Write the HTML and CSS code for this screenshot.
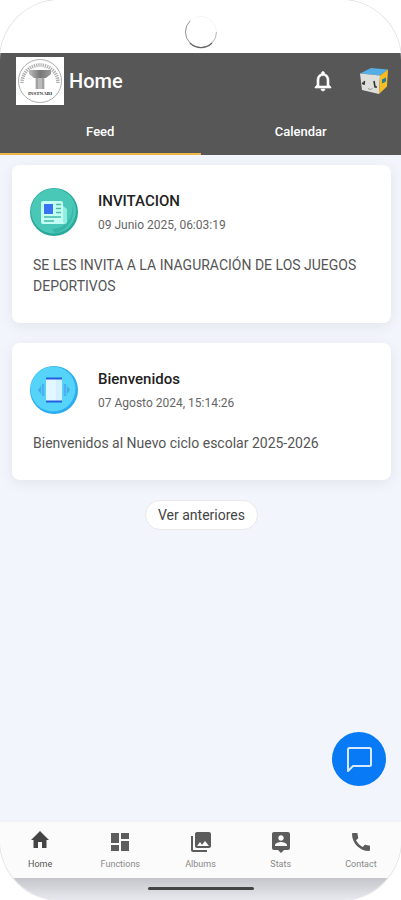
FILE: index.html
```html
<!DOCTYPE html>
<html lang="es">
<head>
  <meta charset="UTF-8">
  <meta name="viewport" content="width=device-width, initial-scale=1">
  <title>Home</title>
  <link rel="stylesheet" href="styles.css">
</head>
<body>
  <div class="phone">
    <!-- Camera -->
    <div class="notch">
      <svg width="34" height="34" viewBox="0 0 34 34" aria-hidden="true">
        <circle cx="17" cy="17" r="15.5" fill="none" stroke="#f4f4f4"/>
        <path d="M6 6A15.5 15.5 0 0 0 6 28" fill="none" stroke="#999"/>
        <path d="M6 28A15.500 15.500 0 0 0 28 28" fill="none" stroke="#666" stroke-width="1.300"/>
        <path d="M28 28A15.500 15.500 0 0 0 32.500 17" fill="none" stroke="#bbb"/>
      </svg>
    </div>

    <!-- Header -->
    <header class="header">
      <div class="appbar">
        <svg class="logo" viewBox="0 0 48 48" role="img" aria-label="Logo">
          <defs>
            <linearGradient id="stone"><stop stop-color="#bbb"/><stop offset=".5" stop-color="#777"/><stop offset="1" stop-color="#999"/></linearGradient>
          </defs>
          <rect width="48" height="48" fill="#fff"/>
          <circle cx="24" cy="24" r="21.5" fill="none" stroke="#999" stroke-width=".8"/>
          <path d="M6 26A18 18 0 1 1 42 26" fill="none" stroke="#b0b0b0" stroke-width="3.600" stroke-dasharray="1.300 .9"/>
          <path d="M13 13h22v4l-5 4H18l-5-4z" fill="url(#stone)"/>
          <path d="M19.500 21h9v11h-9z" fill="#bbb"/>
          <path d="M21 21v11M27 21v11" stroke="#888"/>
          <text x="24" y="38" class="logo-text">INSTNABI</text>
        </svg>
        <h1 class="title">Home</h1>
        <button class="icon-button" aria-label="Notifications">
          <svg width="24" height="24" viewBox="0 0 24 24" fill="#fff" stroke="#fff" stroke-width=".6"><path d="M12 22c1.100 0 2-.9 2-2h-4c0 1.100.9 2 2 2zm6-6v-5c0-3.070-1.630-5.640-4.500-6.320V4c0-.83-.67-1.500-1.500-1.500s-1.500.67-1.500 1.500v.68C7.640 5.360 6 7.920 6 11v5l-2 2v1h16v-1l-2-2zm-2 1H8v-6c0-2.480 1.510-4.500 4-4.500s4 2.020 4 4.500v6z"/></svg>
        </button>
        <button class="icon-button" aria-label="Profile">
          <svg width="30" height="28" viewBox="0 0 30 28">
            <path d="M1 6.500 12 1l17 1.500-8 6z" fill="#55aee5"/>
            <path d="M1 6.500l20 2-1 18.500L3 23z" fill="#dededb"/>
            <path d="M21 8.500l8-6-1 17-8 7.500z" fill="#f7bd25"/>
            <path d="M23 12.500l4-2v4l-4 2z" fill="#277e91"/>
            <path d="M5.500 14l-.5 3-2-1M15 14l1 6h2" fill="none" stroke="#333" stroke-width="1.600"/>
            <path d="M9 21.500q2.500 2 4.500 0" fill="none" stroke="#999"/>
          </svg>
        </button>
      </div>
      <nav class="tabs">
        <button class="tab active">Feed</button>
        <button class="tab">Calendar</button>
      </nav>
    </header>

    <!-- Feed -->
    <main class="feed">
      <article class="card">
        <div class="card-head">
          <svg width="48" height="48" viewBox="0 0 48 48" aria-hidden="true">
            <circle cx="24" cy="24" r="24" fill="#2aa89a"/>
            <circle cx="23.500" cy="23" r="22.500" fill="#49c8b8"/>
            <path d="M42 16q2 14-8 21-6 4-12 4l3 4a22 22 0 0 0 17-29z" fill="#37b7a8"/>
            <path d="M33 18l4 3v12.500a2.500 2.500 0 0 1-2.500 2.500h-2z" fill="#91eee0"/>
            <path d="M13 13h18a2 2 0 0 1 2 2v18q0 2 1 3H13a2 2 0 0 1-2-2V15a2 2 0 0 1 2-2z" fill="#c3fff2"/>
            <rect x="14" y="16" width="9" height="10" fill="#3773f4"/>
            <path d="M26 16.500h5M26 20.500h5M26 24.500h5M14 29h17M14 33h10" stroke="#49b9ad" stroke-width="1.300"/>
          </svg>
          <div class="card-info">
            <h2>INVITACION</h2>
            <time datetime="2025-06-09T06:03:19">09 Junio 2025, 06:03:19</time>
          </div>
        </div>
        <p>SE LES INVITA A LA INAGURACIÓN DE LOS JUEGOS DEPORTIVOS</p>
      </article>

      <article class="card">
        <div class="card-head">
          <svg width="48" height="48" viewBox="0 0 48 48" aria-hidden="true">
            <circle cx="24" cy="24" r="24" fill="#2bacf1"/>
            <circle cx="23" cy="23" r="22.500" fill="#55d3f9"/>
            <path d="M8 24l3-4v8zM40 24l-3-4v8z" fill="#45a9e8"/>
            <path d="M13 18v12M35 18v12" stroke="#4db0ee" stroke-width="2.500"/>
            <path d="M16 13h16v22H16z" fill="#e2f7ff"/>
            <path d="M26 13h6v22h-6z" fill="#d2f0ff"/>
            <path d="M16 12.500h16M16 35.500h16" stroke="#235de0" stroke-width="2"/>
          </svg>
          <div class="card-info">
            <h2>Bienvenidos</h2>
            <time datetime="2024-08-07T15:14:26">07 Agosto 2024, 15:14:26</time>
          </div>
        </div>
        <p>Bienvenidos al Nuevo ciclo escolar 2025-2026</p>
      </article>

      <button class="more">Ver anteriores</button>
    </main>

    <button class="chat" aria-label="Chat">
      <svg width="28" height="28" viewBox="0 0 28 28" fill="none" stroke="#d8eaff" stroke-width="2" stroke-linejoin="round"><path d="M3 26V4.500Q3 3 4.500 3h20Q26 3 26 4.500v15q0 1.500-1.500 1.500H8z"/></svg>
    </button>

    <!-- Bottom navigation -->
    <nav class="bottom-nav">
      <a href="#home" class="current">
        <svg viewBox="0 0 24 24"><path d="M10 18v-6h4v6h4.500v-8H21L12 1 3 10h2.500v8z"/></svg>
        <span>Home</span>
      </a>
      <a href="#functions">
        <svg viewBox="0 0 24 24"><path d="M3 13h8V3H3v10zm0 8h8v-6H3v6zm10 0h8V11h-8v10zm0-18v6h8V3h-8z"/></svg>
        <span>Functions</span>
      </a>
      <a href="#albums">
        <svg viewBox="0 0 24 24"><path d="M22 16V4c0-1.100-.9-2-2-2H8c-1.100 0-2 .9-2 2v12c0 1.100.9 2 2 2h12c1.100 0 2-.9 2-2zm-11-4l2.030 2.710L16 11l4 5H8l3-4zM2 6v14c0 1.100.9 2 2 2h14v-2H4V6H2z"/></svg>
        <span>Albums</span>
      </a>
      <a href="#stats">
        <svg viewBox="0 0 24 24"><path d="M19 2H5c-1.110 0-2 .9-2 2v14c0 1.100.89 2 2 2h4l3 3 3-3h4c1.100 0 2-.9 2-2V4c0-1.100-.9-2-2-2zm-7 3.300c1.490 0 2.700 1.210 2.700 2.700s-1.210 2.700-2.700 2.700S9.300 9.490 9.300 8s1.210-2.700 2.700-2.700zM18 16H6v-.9c0-2 4-3.100 6-3.100s6 1.100 6 3.100v.9z"/></svg>
        <span>Stats</span>
      </a>
      <a href="#contact">
        <svg viewBox="0 0 24 24"><path d="M20.010 15.380c-1.230 0-2.420-.2-3.530-.56-.35-.12-.74-.03-1.010.24l-1.570 1.970c-2.830-1.350-5.480-3.900-6.890-6.830l1.950-1.660c.27-.28.35-.67.24-1.020-.37-1.110-.56-2.300-.56-3.530 0-.54-.45-.99-.99-.99H4.190C3.650 3 3 3.240 3 3.990 3 13.280 10.730 21 20.010 21c.71 0 .99-.63.99-1.180v-3.450c0-.54-.45-.99-.99-.99z"/></svg>
        <span>Contact</span>
      </a>
    </nav>
    <div class="gesture"><span></span></div>
  </div>
</body>
</html>
```

FILE: styles.css
```css
* {
  box-sizing: border-box;
}

body {
  margin: 0;
  background: white;
  color: #555;
  font-family: Roboto, Arial, sans-serif;
}

h1, h2, p {
  margin: 0;
}

button {
  margin: 0;
  padding: 0;
  border: none;
  background: none;
  font-family: inherit;
  cursor: pointer;
}

svg {
  display: block;
}

.phone {
  position: relative;
  display: flex;
  flex-direction: column;
  min-height: 100vh;
  background: #f3f5fd;
  border-radius: 60px;
  box-shadow: 0 0 0 1px #e4e4e4;
  overflow: hidden;
}

.notch {
  display: flex;
  justify-content: center;
  height: 53px;
  padding-top: 15px;
  background: white;
}

/* Header */
.header {
  background: #575757;
  color: white;
}

.appbar {
  display: flex;
  align-items: center;
  height: 56px;
  padding: 0 12px 0 16px;
}

.logo {
  width: 48px;
  height: 48px;
}

.logo-text {
  font-family: "Liberation Serif", serif;
  font-size: 5px;
  font-weight: bold;
  text-anchor: middle;
  fill: #333;
}

.title {
  flex: 1;
  margin-left: 5px;
  font-size: 20px;
  font-weight: 500;
}

.icon-button {
  margin-left: 24px;
}

.tabs {
  display: flex;
}

.tab {
  flex: 1;
  height: 46px;
  border-bottom: 2px solid #575757;
  color: white;
  font-size: 13px;
  font-weight: 500;
}

.tab.active {
  border-bottom-color: #edb64d;
}

/* Feed */
.feed {
  flex: 1;
  display: flex;
  flex-direction: column;
  align-items: center;
  gap: 20px;
  padding: 10px 10px 20px 12px;
}

.card {
  width: 100%;
  padding: 22px 18px 26px;
  background: white;
  border-radius: 8px;
  box-shadow: 0 3px 14px rgba(0, 0, 0, 0.07);
}

.card-head {
  display: flex;
  align-items: center;
  gap: 20px;
}

.card-info {
  padding-top: 2px;
}

.card h2 {
  color: #222;
  font-size: 15px;
  font-weight: 500;
  line-height: 24px;
}

.card time {
  display: block;
  color: #666;
  font-size: 12px;
  line-height: 24px;
}

.card p {
  padding: 18px 3px 0;
  font-size: 14px;
  line-height: 21px;
}

.more {
  height: 30px;
  padding: 0 12px;
  background: white;
  border: 1px solid #e9e9ec;
  border-radius: 15px;
  color: #444;
  font-size: 14px;
}

.chat {
  position: absolute;
  right: 15px;
  bottom: 114px;
  display: flex;
  align-items: center;
  justify-content: center;
  width: 54px;
  height: 54px;
  border-radius: 50%;
  background: #087af5;
}

/* Bottom navigation */
.bottom-nav {
  display: flex;
  height: 56px;
  background: #fbfbfb;
  box-shadow: 0 -1px 4px rgba(0, 0, 0, 0.02);
}

.bottom-nav a {
  flex: 1;
  display: flex;
  flex-direction: column;
  align-items: center;
  gap: 4px;
  padding-top: 8px;
  color: #888;
  font-size: 9px;
  line-height: 12px;
  text-decoration: none;
}

.bottom-nav svg {
  width: 24px;
  height: 24px;
  fill: #5c5c5c;
}

.bottom-nav .current {
  color: #555;
}

.bottom-nav .current svg {
  fill: #444;
}

.gesture {
  display: flex;
  justify-content: center;
  height: 22px;
  padding-top: 9px;
  background: linear-gradient(#c4c6cb, #e8e9ee);
}

.gesture span {
  width: 106px;
  height: 3px;
  border-radius: 2px;
  background: #444;
}
```
